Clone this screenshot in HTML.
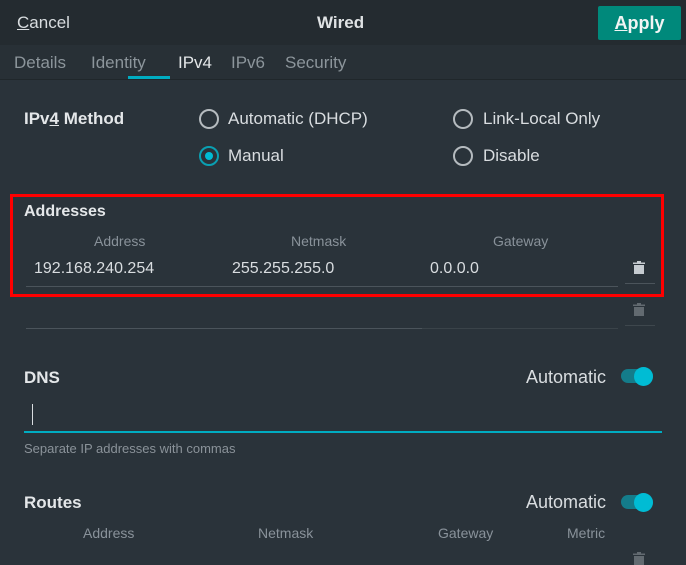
<!DOCTYPE html>
<html><head><style>
body{margin:0;width:686px;height:563px;background:#2a333a;font-family:"Liberation Sans",sans-serif;overflow:hidden;position:relative;color:#e8ebed}
.a{position:absolute;white-space:nowrap}
.hdr{position:absolute;left:0;top:0;width:686px;height:45px;background:#242b30}
.tabs{position:absolute;left:0;top:45px;width:686px;height:34px;background:#283036;border-bottom:1px solid #20272b}
.tab{position:absolute;top:7px;font-size:17px;color:#8c959b}
.lbl{font-size:14px;color:#89929a}
.val{font-size:16px;color:#d9dde0}
.b{font-weight:bold;font-size:17px;color:#e4e7e9}
.radio{position:absolute;width:16px;height:16px;border:2px solid #b5bbbf;border-radius:50%}
.trash{position:absolute;width:12px;height:13px}
.tog{position:absolute;width:32px;height:14px;border-radius:7px;background:#147c8a}
.tog i{position:absolute;right:0px;top:-2.5px;width:19px;height:19px;border-radius:50%;background:#00bcd4}
.auto{position:absolute;right:80px;font-size:18px;color:#d9dde0;white-space:nowrap}
</style></head><body>
<div class="hdr"></div>
<div class="a" style="left:17px;top:13px;font-size:17px;color:#d8dcdf"><u>C</u>ancel</div>
<div class="a" style="left:317px;top:13px;font-size:17px;font-weight:bold;color:#dfe2e4">Wired</div>
<div class="a" style="left:598px;top:6px;width:83px;height:34px;background:#00897b;border-radius:2px;font-size:18px;font-weight:bold;color:#f1f5f4;text-align:center;line-height:35px"><u>A</u>pply</div>
<div class="tabs">
<div class="tab" style="left:14px;top:8px">Details</div>
<div class="tab" style="left:91px;top:8px">Identity</div>
<div class="tab" style="left:178px;top:8px;color:#e4e7e9">IPv4</div>
<div class="tab" style="left:231px;top:8px">IPv6</div>
<div class="tab" style="left:285px;top:8px">Security</div>
<div style="position:absolute;left:128px;top:31px;width:42px;height:3px;background:#00acc1"></div>
</div>
<div class="a b" style="left:24px;top:109px">IPv<u>4</u> Method</div>
<div class="radio" style="left:199px;top:109px"></div>
<div class="a" style="left:228px;top:109px;font-size:17px;color:#d9dde0">Automatic (DHCP)</div>
<div class="radio" style="left:199px;top:146px;border-color:#0aa0b2"><div style="position:absolute;left:4px;top:4px;width:8px;height:8px;border-radius:50%;background:#00bcd4"></div></div>
<div class="a" style="left:228px;top:146px;font-size:17px;color:#d9dde0">Manual</div>
<div class="radio" style="left:453px;top:109px"></div>
<div class="a" style="left:483px;top:109px;font-size:17px;color:#d9dde0">Link-Local Only</div>
<div class="radio" style="left:453px;top:146px"></div>
<div class="a" style="left:483px;top:146px;font-size:17px;color:#d9dde0">Disable</div>

<div class="a" style="left:10px;top:194px;width:648px;height:97px;border:3px solid #ff0000"></div>
<div class="a b" style="left:24px;top:203px;font-size:16px">Addresses</div>
<div class="a lbl" style="left:94px;top:233px">Address</div>
<div class="a lbl" style="left:291px;top:233px">Netmask</div>
<div class="a lbl" style="left:493px;top:233px">Gateway</div>
<div class="a val" style="left:34px;top:260px">192.168.240.254</div>
<div class="a val" style="left:232px;top:260px">255.255.255.0</div>
<div class="a val" style="left:430px;top:260px">0.0.0.0</div>
<div class="a" style="left:26px;top:286px;width:592px;height:1px;background:#4b545b"></div>
<div class="a" style="left:625px;top:283px;width:30px;height:1px;background:#4b545b"></div>
<svg class="trash" style="left:633px;top:261px" viewBox="0 0 12 13"><rect x="0" y="1.5" width="12" height="1.5" fill="#c5cbd0"/><rect x="4" y="0" width="4" height="2" fill="#c5cbd0"/><rect x="1" y="4" width="10" height="9" fill="#c5cbd0"/></svg>
<div class="a" style="left:26px;top:328px;width:396px;height:1px;background:#4b545b"></div>
<div class="a" style="left:422px;top:328px;width:196px;height:1px;background:#3a4349"></div>
<div class="a" style="left:625px;top:325px;width:30px;height:1px;background:#3e474d"></div>
<svg class="trash" style="left:633px;top:303px" viewBox="0 0 12 13"><rect x="0" y="1.5" width="12" height="1.5" fill="#626a70"/><rect x="4" y="0" width="4" height="2" fill="#626a70"/><rect x="1" y="4" width="10" height="9" fill="#626a70"/></svg>

<div class="a b" style="left:24px;top:368px">DNS</div>
<div class="auto" style="top:367px">Automatic</div>
<div class="tog" style="left:621px;top:369px"><i></i></div>
<div class="a" style="left:32px;top:404px;width:1px;height:21px;background:#d9dde0"></div>
<div class="a" style="left:24px;top:431px;width:638px;height:2px;background:#00acc1"></div>
<div class="a" style="left:24px;top:441px;font-size:13px;color:#8a9299">Separate IP addresses with commas</div>

<div class="a b" style="left:24px;top:493px">Routes</div>
<div class="auto" style="top:492px">Automatic</div>
<div class="tog" style="left:621px;top:495px"><i></i></div>
<div class="a lbl" style="left:83px;top:525px">Address</div>
<div class="a lbl" style="left:258px;top:525px">Netmask</div>
<div class="a lbl" style="left:438px;top:525px">Gateway</div>
<div class="a lbl" style="left:567px;top:525px">Metric</div>
<svg class="trash" style="left:633px;top:552px" viewBox="0 0 12 13"><rect x="0" y="1.5" width="12" height="1.5" fill="#626a70"/><rect x="4" y="0" width="4" height="2" fill="#626a70"/><rect x="1" y="4" width="10" height="9" fill="#626a70"/></svg>
</body></html>
